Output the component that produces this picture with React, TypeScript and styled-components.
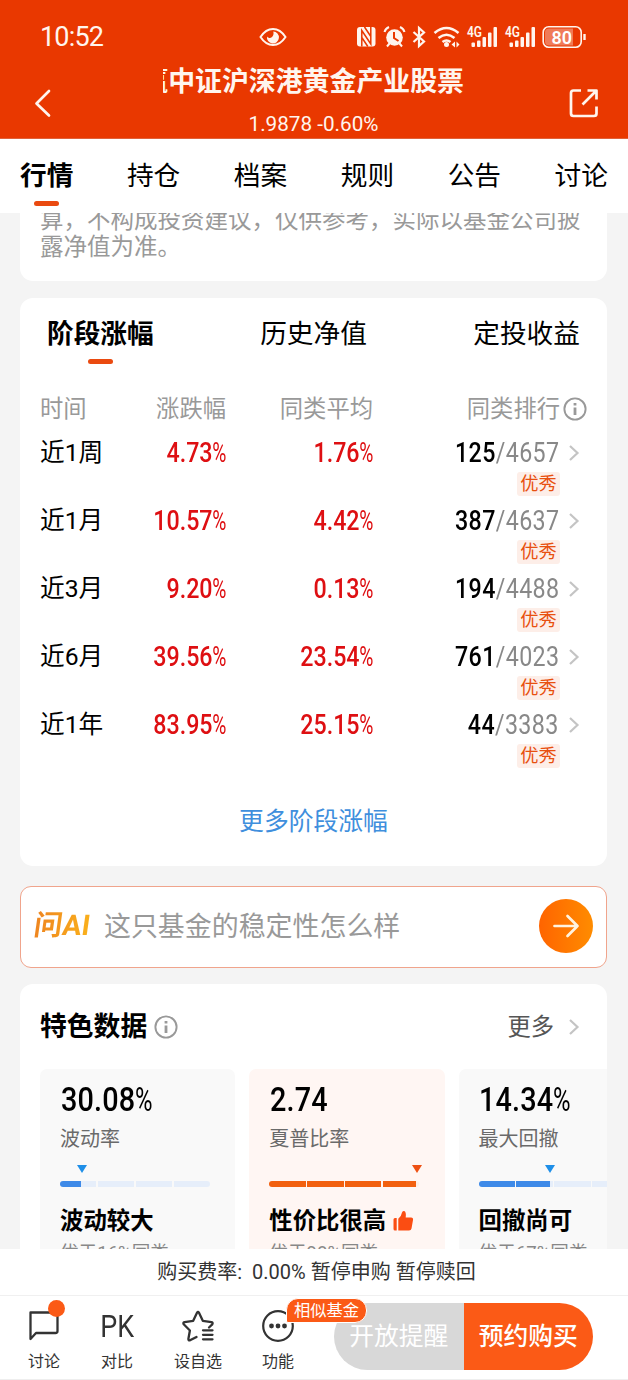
import React from "react";
import styled, { createGlobalStyle } from "styled-components";

const Global = createGlobalStyle`
  * { box-sizing: border-box; }
  body {
    margin: 0;
    background: #f4f4f4;
    font-family: Roboto, "Noto Sans CJK SC", sans-serif;
    color: #000;
  }
`;

const Screen = styled.div`
  width: 628px;
  height: 1380px;
  display: flex;
  flex-direction: column;
  overflow: hidden;
  white-space: nowrap;
`;

/* ---------- header ---------- */

const Header = styled.header`
  height: 139px;
  flex: none;
  background: #e93800;
  color: #fff5ee;
  border-bottom: 1px solid #e0623a;
`;

const StatusBar = styled.div`
  height: 62px;
  padding: 12px 42px 0 40px;
  display: flex;
  align-items: center;
`;

const Clock = styled.div`
  width: 219px;
  font-size: 27px;
  line-height: 30px;
  letter-spacing: -0.8px;
`;

const StatusIcons = styled.div`
  margin-left: auto;
  display: flex;
`;

const TitleBar = styled.div`
  height: 76px;
  display: flex;
  align-items: flex-start;
  justify-content: space-between;
  padding: 0 28px 0 32px;
`;

const BarIcon = styled.div<{ $top: number }>`
  width: 32px;
  padding-top: ${(p) => p.$top}px;
  svg { display: block; }
`;

const TitleBlock = styled.div`
  width: 301px;
  margin-right: 5px;
  display: flex;
  flex-direction: column;
  align-items: center;
`;

const Title = styled.div`
  width: 301px;
  height: 38px;
  line-height: 40px;
  overflow: hidden;
  display: flex;
  justify-content: flex-end;
  font-size: 26.9px;
  font-weight: 700;
`;

const Quote = styled.div`
  margin-top: 12px;
  font-size: 20.7px;
  line-height: 24px;
`;

/* ---------- tabs ---------- */

const Tabs = styled.nav`
  height: 74px;
  flex: none;
  background: #fff;
  display: flex;
  justify-content: space-between;
  padding: 17px 20px 0;
`;

const Tab = styled.div<{ $active?: boolean }>`
  display: flex;
  flex-direction: column;
  align-items: center;
  font-size: 26.7px;
  line-height: 40px;
  font-weight: ${(p) => (p.$active ? 700 : 400)};
  &::after {
    content: "";
    width: 25px;
    height: 5px;
    margin-top: 5px;
    border-radius: 3px;
    background: ${(p) => (p.$active ? "#ea4a10" : "transparent")};
  }
`;

/* ---------- scroll area ---------- */

const Content = styled.main`
  height: 1036px;
  flex: none;
  overflow: hidden;
  padding: 0 21px 0 20px;
`;

const Card = styled.section`
  background: #fff;
  border-radius: 13px;
`;

const NoteCard = styled(Card)`
  height: 68px;
  border-radius: 0 0 13px 13px;
  padding: 0 20px;
  overflow: hidden;
`;

const Note = styled.p`
  margin: -6px 0 0;
  font-size: 23.5px;
  line-height: 27px;
  color: #999;
`;

const StageCard = styled(Card)`
  margin-top: 17px;
  height: 568px;
  padding: 16px 20px 0;
`;

const StageTabs = styled.div`
  display: flex;
  justify-content: space-between;
  padding: 0 7px 0 7px;
  height: 77px;
`;

const StageHead = styled.div`
  display: grid;
  grid-template-columns: 86px 100px 147px 1fr;
  height: 34px;
  font-size: 23.3px;
  line-height: 36px;
  color: #999;
  text-align: right;
  & > :first-child { text-align: left; }
`;

const HeadRank = styled.div`
  display: flex;
  justify-content: flex-end;
  align-items: center;
  gap: 3px;
  height: 35px;
`;

const StageRow = styled.div`
  display: grid;
  grid-template-columns: 86px 100px 147px 1fr;
  height: 68.1px;
  padding-top: 10px;
`;

const Period = styled.div`
  font-size: 24.7px;
  line-height: 35px;
`;

const Figure = styled.div<{ $size?: number; $left?: boolean; $color?: string }>`
  font-size: ${(p) => p.$size ?? 27}px;
  line-height: 36px;
  font-weight: 500;
  color: ${(p) => p.$color ?? "#000"};
  display: flex;
  justify-content: ${(p) => (p.$left ? "flex-start" : "flex-end")};
  transform: scaleX(0.86);
  transform-origin: ${(p) => (p.$left ? "left" : "right")};
`;

const FeatureFigure = styled(Figure)`
  letter-spacing: 0.2px;
  margin-left: 0.5px;
`;

const Percent = styled.span`
  display: inline-block;
  width: 0.58em;
  font-weight: 400;
  transform: scaleX(0.83);
  transform-origin: left;
`;

const RankCell = styled.div`
  display: flex;
  justify-content: flex-end;
  gap: 8px;
  padding-right: 7px;
`;

const RankStack = styled.div`
  display: flex;
  flex-direction: column;
  align-items: flex-end;
`;

const Total = styled.span`
  font-weight: 400;
  color: #888;
`;

const RankFigure = styled(Figure)`
  letter-spacing: 0.45px;
  margin-right: 1px;
`;

const Badge = styled.span`
  width: 43px;
  height: 24px;
  margin-top: 1px;
  border-radius: 3px;
  background: #fdeee8;
  color: #e8500f;
  font-size: 18.3px;
  line-height: 24px;
  text-align: center;
`;

const ChevronBox = styled.span<{ $top?: number }>`
  padding-top: ${(p) => p.$top ?? 0}px;
  svg { display: block; }
`;

const MoreLink = styled.div`
  margin-top: 39px;
  text-align: center;
  font-size: 24.8px;
  line-height: 36px;
  color: #3f8fdd;
`;

/* ---------- ask AI ---------- */

const AskBox = styled.section`
  margin-top: 20px;
  height: 82px;
  background: #fff;
  border: 1px solid #f0a48c;
  border-radius: 11px;
  display: flex;
  align-items: center;
  padding: 0 13px 2px 12px;
`;

const AskLogo = styled.span`
  width: 62px;
  padding-left: 1px;
  font-size: 28.5px;
  line-height: 32px;
  font-weight: 700;
  transform: skewX(-8deg);
  color: transparent;
  background: linear-gradient(90deg, #ee8420, #fbb41b);
  background-clip: text;
  -webkit-background-clip: text;
`;

const AskText = styled.span`
  margin-left: 9px;
  padding-top: 2px;
  flex: 1;
  font-size: 26.95px;
  line-height: 36px;
  color: #999;
`;

const AskButton = styled.span`
  width: 54px;
  height: 54px;
  border-radius: 50%;
  background: linear-gradient(90deg, #ff6400, #ff8c00);
  display: flex;
  align-items: center;
  justify-content: center;
`;

/* ---------- feature data ---------- */

const FeatureCard = styled(Card)`
  margin-top: 16px;
  height: 300px;
  overflow: hidden;
`;

const FeatureHead = styled.div`
  display: flex;
  align-items: center;
  height: 85px;
  padding: 0 27px 0 20px;
`;

const FeatureTitle = styled.h2`
  margin: 0 7px 0 0;
  font-size: 26.8px;
  line-height: 40px;
  font-weight: 700;
`;

const FeatureMore = styled.span`
  margin-left: auto;
  margin-right: 14px;
  font-size: 23.3px;
  line-height: 34px;
  color: #555;
`;

const FeatureList = styled.div`
  display: flex;
  gap: 14px;
  padding-left: 20px;
`;

const FeatureItem = styled.div<{ $warm?: boolean }>`
  flex: none;
  width: 195.3px;
  height: 240px;
  border-radius: 7px;
  background: ${(p) => (p.$warm ? "#fff6f3" : "#f9f9f9")};
  padding: 13px 20px 0;
`;

const Caption = styled.div`
  margin-top: 6px;
  font-size: 20px;
  line-height: 30px;
  color: #6a6a6a;
`;

const Gauge = styled.div`
  position: relative;
  margin-top: 27px;
  height: 6px;
  width: 150px;
  display: flex;
  gap: 1.5px;
  border-radius: 3px;
`;

const Segment = styled.div<{ $fill: number; $color: string; $rest: string }>`
  flex: 1;
  background: linear-gradient(
    90deg,
    ${(p) => p.$color} ${(p) => p.$fill}%,
    ${(p) => p.$rest} ${(p) => p.$fill}%
  );
  &:first-child { border-radius: 3px 0 0 3px; }
  &:nth-child(4) { border-radius: 0 3px 3px 0; }
`;

const Pointer = styled.div<{ $at: number; $color: string }>`
  position: absolute;
  top: -16px;
  left: ${(p) => p.$at - 5}px;
  border: 5px solid transparent;
  border-top: 8px solid ${(p) => p.$color};
  border-bottom: 0;
`;

const Verdict = styled.div`
  margin-top: 17px;
  display: flex;
  align-items: center;
  gap: 6px;
  font-size: 23.4px;
  line-height: 34px;
  font-weight: 700;
`;

const Compare = styled.div`
  font-size: 18.6px;
  line-height: 30px;
  color: #888;
`;

/* ---------- footer ---------- */

const FeeBar = styled.div`
  height: 47px;
  flex: none;
  background: #fff;
  border-bottom: 1px solid #f0f0f0;
  display: flex;
  justify-content: center;
  padding-left: 5px;
  font-size: 20px;
  line-height: 47px;
  color: #333;
`;

const ActionBar = styled.footer`
  height: 84px;
  flex: none;
  background: #fff;
  border-bottom: 1px solid #eee;
  display: flex;
  padding-left: 3px;
`;

const Action = styled.div<{ $width: number }>`
  position: relative;
  width: ${(p) => p.$width}px;
  padding-top: 10px;
  display: flex;
  flex-direction: column;
  align-items: center;
  color: #333;
  font-size: 16px;
  line-height: 25px;
  svg { display: block; margin-bottom: 3px; }
`;

const PkMark = styled.div`
  height: 40px;
  margin-bottom: 3px;
  font-size: 32px;
  line-height: 41px;
  transform: scaleX(0.84);
`;

const Dot = styled.span`
  position: absolute;
  left: 45px;
  top: 4px;
  width: 17px;
  height: 17px;
  border-radius: 50%;
  background: #fb5a16;
`;

const Similar = styled.span`
  position: absolute;
  z-index: 1;
  left: 39px;
  top: 2px;
  width: 81px;
  height: 25px;
  border: 1px solid #fff;
  border-radius: 12px 12px 12px 2px;
  background: #fb5a16;
  color: #fff;
  font-size: 16.3px;
  line-height: 23px;
  text-align: center;
`;

const Buttons = styled.div`
  margin: 7px 0 0 25px;
  width: 259px;
  height: 67px;
  border-radius: 34px;
  overflow: hidden;
  display: flex;
`;

const Button = styled.div<{ $bg: string; $bold?: boolean }>`
  flex: 1;
  background: ${(p) => p.$bg};
  color: #fff;
  font-size: 24.8px;
  line-height: 68px;
  font-weight: ${(p) => (p.$bold ? 500 : 400)};
  text-align: center;
`;

/* ---------- icons ---------- */

const Chevron = () => (
  <svg width="12" height="18" viewBox="0 0 12 18" fill="none" stroke="#c4c4c4" strokeWidth="2.2">
    <path d="M2 2l7.5 7L2 16" />
  </svg>
);

const Info = () => (
  <svg width="24" height="24" viewBox="0 0 24 24" fill="none" stroke="#999" strokeWidth="1.9">
    <circle cx="12" cy="12" r="10.6" />
    <path d="M12 10.5v7.5M12 6v2.4" strokeWidth="2.8" />
  </svg>
);

const Eye = () => (
  <svg width="28" height="20" viewBox="0 0 28 20">
    <path d="M1.5 10C5 4.600 9.500 2 14 2s9 2.600 12.500 8C23 15.400 18.500 18 14 18S5 15.400 1.500 10z" fill="none" stroke="#fff5ee" strokeWidth="2" />
    <path d="M14.300 4.500A6 6 0 1 1 8 9.500c1.300 1.600 3.200 2 4.700.8 1.500-1.300 2.300-3.100 1.600-5.800z" fill="#fff5ee" />
  </svg>
);

const bars = [4.5, 6.5, 10, 14.5, 20];

const StatusGlyphs = () => (
  <svg width="232" height="26" viewBox="354 23 232 26" fill="none" stroke="#fff5ee">
    <rect x="357" y="26" width="18.500" height="19.500" rx="3" fill="#fff5ee" stroke="none" />
    <path d="M361.800 45.500V29.500L370.800 43V26M364.500 26l6 9M361.800 36.500l6 9" stroke="#e93800" strokeWidth="1.500" />
    <circle cx="394.500" cy="36.500" r="8.300" fill="#fff5ee" stroke="none" />
    <path d="M394 31v6l4.500 3" stroke="#e93800" strokeWidth="2" />
    <path d="M384.500 31q1-3.500 4.500-5M404.500 31q-1-3.500-4.500-5M389.500 42.500l-2.500 3M399.500 42.500l2.500 3" strokeWidth="2" />
    <path d="M413.500 31l10.500 9.500-5 4.500V27l5 4.500-10.500 9.500" strokeWidth="2.200" />
    <path d="M434.500 32q12-10 24 0M438.500 37q8-6.500 16 0M442.500 41q4-3 8 0" strokeWidth="2.600" />
    <circle cx="446.500" cy="43.500" r="2.500" fill="#fff5ee" stroke="none" />
    <path d="M455 40.500v6l-3.500-3zM456.500 40.500v6l3-3z" fill="#fff5ee" stroke="none" />
    {[471.500, 509.500].map((x) => (
      <g key={x} fill="#fff5ee" stroke="none">
        {bars.map((h, i) => (
          <rect key={i} x={x + i * 5.5} y={46 - h} width="3.500" height={h} rx="1" />
        ))}
        <text x={x - 4.5} y="36.300" fontSize="14" fontWeight="600" textLength="15" lengthAdjust="spacingAndGlyphs">4G</text>
      </g>
    ))}
    <rect x="543.200" y="25.700" width="38" height="20.500" rx="5.500" strokeWidth="1.600" />
    <path d="M549 27.500h24v17h-24q-4 0-4-4v-9q0-4 4-4z" fill="#f07b58" stroke="none" />
    <path d="M584.500 33v6" strokeWidth="2.400" />
    <text x="551.500" y="42.800" fontSize="19" fontWeight="600" textLength="20.500" lengthAdjust="spacingAndGlyphs" fill="#fff" stroke="none">80</text>
  </svg>
);

const Thumb = () => (
  <svg width="22" height="22" viewBox="0 0 22 22" fill="#fb4d12">
    <path d="M1.500 9.500q0-1.500 1.500-1.500h1.700v12.500H3q-1.500 0-1.500-1.500zM6.300 8.700Q9.500 6 10 2.500 10.300.8 12 1q2.500.500 1.700 6.500h5.300q2.500 0 2 2.500l-1.500 8.500q-.4 2-2.500 2H6.300z" />
  </svg>
);

/* ---------- data ---------- */

const periods = [
  { name: "近1周", change: "4.73", average: "1.76", rank: "125", total: "4657" },
  { name: "近1月", change: "10.57", average: "4.42", rank: "387", total: "4637" },
  { name: "近3月", change: "9.20", average: "0.13", rank: "194", total: "4488" },
  { name: "近6月", change: "39.56", average: "23.54", rank: "761", total: "4023" },
  { name: "近1年", change: "83.95", average: "25.15", rank: "44", total: "3383" },
];

const features = [
  { value: "30.08", unit: "%", name: "波动率", fills: [57, 0, 0, 0], at: 21.500, verdict: "波动较大", compare: "优于16%同类" },
  { value: "2.74", unit: "", name: "夏普比率", fills: [100, 100, 100, 92], at: 148, verdict: "性价比很高", compare: "优于98%同类", warm: true },
  { value: "14.34", unit: "%", name: "最大回撤", fills: [100, 91, 0, 0], at: 71, verdict: "回撤尚可", compare: "优于67%同类" },
];

export default function App() {
  return (
    <Screen>
      <Global />
      <Header>
        <StatusBar>
          <Clock>10:52</Clock>
          <Eye />
          <StatusIcons><StatusGlyphs /></StatusIcons>
        </StatusBar>
        <TitleBar>
          <BarIcon $top={27}>
            <svg width="20" height="30" viewBox="0 0 20 30" fill="none" stroke="#fff5ee" strokeWidth="2.700" strokeLinecap="round" strokeLinejoin="round">
              <path d="M17 2L4.500 14.500 17 26.500" />
            </svg>
          </BarIcon>
          <TitleBlock>
            <Title><span>赢中证沪深港黄金产业股票</span></Title>
            <Quote>1.9878 -0.60%</Quote>
          </TitleBlock>
          <BarIcon $top={26}>
            <svg width="32" height="32" viewBox="0 0 32 32" fill="none" stroke="#fff5ee" strokeWidth="2.700" strokeLinejoin="round">
              <path d="M13 2.500H5.500Q3 2.500 3 5v20.500q0 2.500 2.500 2.500H26q2.500 0 2.500-2.500v-7M19.500 2.500h9v9M28.500 2.500L14.500 16.500" />
            </svg>
          </BarIcon>
        </TitleBar>
      </Header>

      <Tabs>
        {["行情", "持仓", "档案", "规则", "公告", "讨论"].map((name, i) => (
          <Tab key={name} $active={i === 0}>{name}</Tab>
        ))}
      </Tabs>

      <Content>
        <NoteCard>
          <Note>算，不构成投资建议，仅供参考，实际以基金公司披<br />露净值为准。</Note>
        </NoteCard>

        <StageCard>
          <StageTabs>
            <Tab $active>阶段涨幅</Tab>
            <Tab>历史净值</Tab>
            <Tab>定投收益</Tab>
          </StageTabs>
          <StageHead>
            <span>时间</span>
            <span>涨跌幅</span>
            <span>同类平均</span>
            <HeadRank>同类排行<Info /></HeadRank>
          </StageHead>
          {periods.map((p) => (
            <StageRow key={p.name}>
              <Period>{p.name}</Period>
              <Figure $color="#de0f12">{p.change}<Percent>%</Percent></Figure>
              <Figure $color="#de0f12">{p.average}<Percent>%</Percent></Figure>
              <RankCell>
                <RankStack>
                  <RankFigure>{p.rank}<Total>/{p.total}</Total></RankFigure>
                  <Badge>优秀</Badge>
                </RankStack>
                <ChevronBox $top={9}><Chevron /></ChevronBox>
              </RankCell>
            </StageRow>
          ))}
          <MoreLink>更多阶段涨幅</MoreLink>
        </StageCard>

        <AskBox>
          <AskLogo>问AI</AskLogo>
          <AskText>这只基金的稳定性怎么样</AskText>
          <AskButton>
            <svg width="28" height="24" viewBox="0 0 28 24" fill="none" stroke="#fff3df" strokeWidth="2.700" strokeLinecap="round" strokeLinejoin="round">
              <path d="M2.500 12h23M15.500 2l10 10-10 10" />
            </svg>
          </AskButton>
        </AskBox>

        <FeatureCard>
          <FeatureHead>
            <FeatureTitle>特色数据</FeatureTitle>
            <Info />
            <FeatureMore>更多</FeatureMore>
            <Chevron />
          </FeatureHead>
          <FeatureList>
            {features.map((f) => {
              const color = f.warm ? "#f2600f" : "#3e8ae8";
              return (
                <FeatureItem key={f.name} $warm={f.warm}>
                  <FeatureFigure $size={33.5} $left>{f.value}{f.unit && <Percent>%</Percent>}</FeatureFigure>
                  <Caption>{f.name}</Caption>
                  <Gauge>
                    {f.fills.map((fill, i) => (
                      <Segment key={i} $fill={fill} $color={color} $rest={f.warm ? "#fdeee6" : "#e6eefa"} />
                    ))}
                    <Pointer $at={f.at} $color={f.warm ? "#ee5012" : "#1f8fe8"} />
                  </Gauge>
                  <Verdict>{f.verdict}{f.warm && <Thumb />}</Verdict>
                  <Compare>{f.compare}</Compare>
                </FeatureItem>
              );
            })}
          </FeatureList>
        </FeatureCard>
      </Content>

      <FeeBar>购买费率:&nbsp; 0.00% 暂停申购 暂停赎回</FeeBar>

      <ActionBar>
        <Action $width={82}>
          <svg width="40" height="40" viewBox="0 0 40 40" fill="none" stroke="#333" strokeWidth="2.300" strokeLinejoin="round">
            <path d="M6.500 6.500h23.500q3.500 0 3.500 3v15.500q0 2-2 2H12L6.500 33z" />
          </svg>
          讨论
          <Dot />
        </Action>
        <Action $width={64}>
          <PkMark>PK</PkMark>
          对比
        </Action>
        <Action $width={98}>
          <svg width="40" height="40" viewBox="0 0 40 40" fill="none" stroke="#333" strokeWidth="2.300" strokeLinejoin="round" strokeLinecap="round">
            <path d="M18.500 31l-6.500 3.300q-1.800.4-1.600-1.500l1.500-8.300-6.200-6.200q-1-1.500.8-2.100l8.700-1.400 3.800-8q1-1.600 2 0l3.800 8 8.700 1.400q1.800.6.8 2.100l-3.300 3.200" />
            <path d="M25 24.300h9.500M25 28.800h9.500M25 33.300h9.500" />
          </svg>
          设自选
        </Action>
        <Action $width={62}>
          <svg width="40" height="40" viewBox="0 0 40 40" fill="none" stroke="#333" strokeWidth="2.200">
            <circle cx="20" cy="20" r="14.800" />
            <g fill="#333" stroke="none">
              <circle cx="13.500" cy="20" r="2.400" />
              <circle cx="20" cy="20" r="2.400" />
              <circle cx="26.500" cy="20" r="2.400" />
            </g>
          </svg>
          功能
          <Similar>相似基金</Similar>
        </Action>
        <Buttons>
          <Button $bg="#d8d8d8">开放提醒</Button>
          <Button $bg="#fb5a16" $bold>预约购买</Button>
        </Buttons>
      </ActionBar>
    </Screen>
  );
}
